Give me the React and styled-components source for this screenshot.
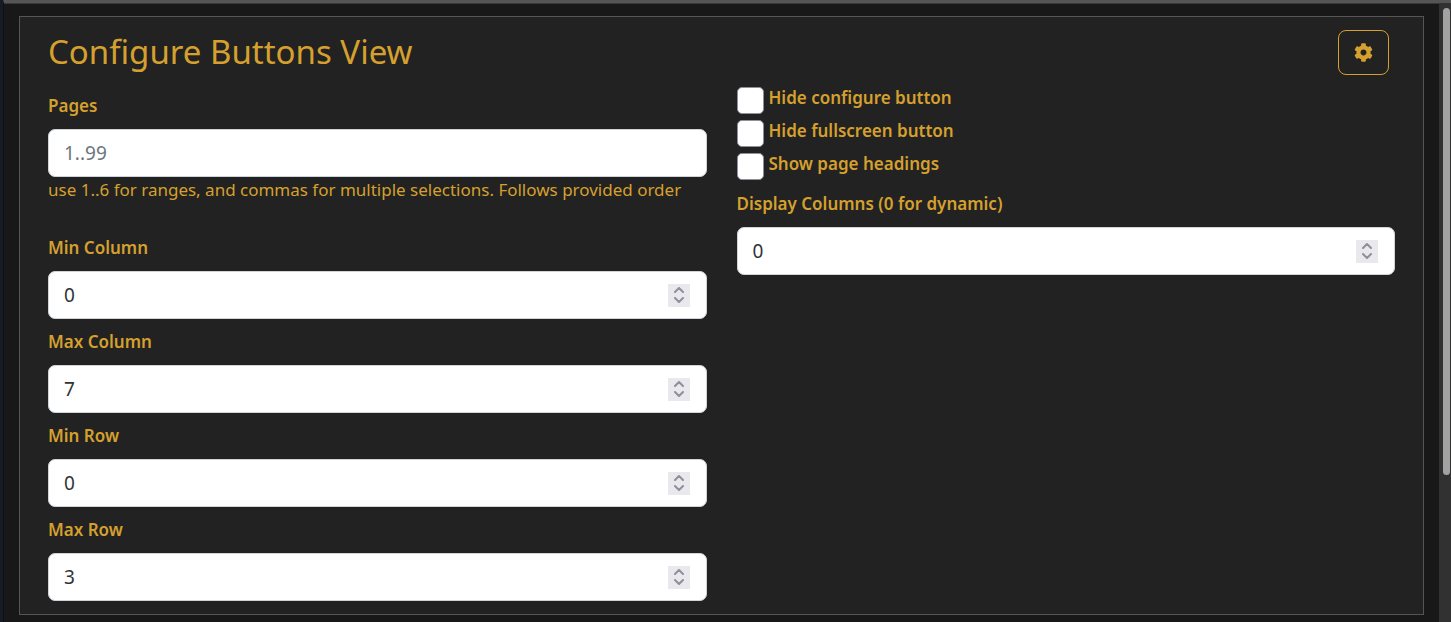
import React, { useState } from "react";
import styled, { createGlobalStyle } from "styled-components";

const GlobalStyle = createGlobalStyle`
  *, *::before, *::after { box-sizing: border-box; }
  body {
    margin: 0;
    background: #181818;
    color: #d5a02e;
    font-family: "Noto Sans", "Open Sans", sans-serif;
    font-size: 17px;
    line-height: 28px;
  }
`;

const Page = styled.div`
  display: flex;
  min-height: 100vh;
  border-left: 3px solid #161c24;
`;

const Main = styled.main`
  flex: 1;
  min-width: 0;
  border-top: 3px solid #555555;
  border-left: 1px solid #101010;
  box-shadow: inset 0 1px 0 #383838;
  padding: 13px 15px 6px;
`;

const Card = styled.section`
  display: flex;
  flex-direction: column;
  background: #222222;
  border: 1px solid #555555;
  padding: 13px 28px;
`;

const Header = styled.header`
  display: flex;
  justify-content: space-between;
  align-items: flex-start;
  padding-right: 6px;
`;

const Title = styled.h1`
  margin: 0;
  font-size: 33px;
  font-weight: 400;
  line-height: 44px;
`;

const SettingsButton = styled.button`
  display: flex;
  align-items: center;
  justify-content: center;
  width: 51px;
  height: 45px;
  padding: 0;
  color: inherit;
  background: transparent;
  border: 1px solid #d5a02e;
  border-radius: 8px;
  cursor: pointer;
`;

const Columns = styled.div`
  display: grid;
  grid-template-columns: 1fr 1fr;
  gap: 30px;
`;

const Column = styled.div`
  display: flex;
  flex-direction: column;
  gap: 9px;
  padding-top: ${(p) => (p.$compact ? 12 : 17)}px;
`;

const Field = styled.div`
  display: flex;
  flex-direction: column;
`;

const Label = styled.label`
  font-weight: 600;
  line-height: 28px;
  padding-bottom: 9px;
`;

const Box = styled.div`
  display: flex;
  align-items: center;
  height: 48px;
  padding: 0 16px 0 15px;
  background: #ffffff;
  border: 1px solid #ced4da;
  border-radius: 7px;
`;

const Input = styled.input`
  flex: 1;
  min-width: 0;
  height: 100%;
  padding: 0;
  border: 0;
  outline: 0;
  background: transparent;
  color: #303438;
  font: inherit;
  font-size: 19px;
  appearance: textfield;
  &::placeholder { color: #6c757d; opacity: 1; }
  &::-webkit-inner-spin-button { appearance: none; margin: 0; }
`;

const Stepper = styled.div`
  display: flex;
  flex-direction: column;
  width: 22px;
  height: 23px;
  background: #e9e9ed;
`;

const Step = styled.button`
  display: flex;
  flex: 1;
  align-items: ${(p) => (p.$up ? "flex-end" : "flex-start")};
  justify-content: center;
  min-height: 0;
  padding: 2px 0;
  border: 0;
  background: transparent;
  color: #8f8f9d;
`;

const Help = styled.p`
  margin: 0 0 22px;
  line-height: 26px;
`;

const Options = styled.div`
  display: flex;
  flex-direction: column;
  gap: 5px;
`;

const Option = styled.div`
  display: flex;
  align-items: flex-start;
  gap: 5px;
  height: 28px;
`;

const OptionLabel = styled.label`
  font-weight: 600;
  line-height: 22px;
`;

const Checkbox = styled.input`
  appearance: none;
  flex: none;
  width: 27px;
  height: 27px;
  margin: 0;
  background: #ffffff;
  border: 1px solid #8f8f9d;
  border-radius: 5px;
  &:checked { background: #d5a02e; }
`;

const ScrollTrack = styled.div`
  width: 12px;
  padding: 5px 1px 0 4px;
  border-top: 3px solid #555555;
  background: #313131;
`;

const ScrollThumb = styled.div`
  height: 75vh;
  border-radius: 4px;
  background: #a3a3a1;
`;

function GearIcon() {
  return (
    <svg width="19" height="19" viewBox="0 0 512 512" fill="currentColor" aria-hidden="true">
      <path d="M487.4 315.7l-42.6-24.6c4.3-23.2 4.3-47 0-70.2l42.6-24.6c4.9-2.8 7.1-8.6 5.5-14-11.1-35.6-30-67.8-54.7-94.6-3.8-4.1-10-5.1-14.8-2.3L380.8 110c-17.9-15.4-38.5-27.3-60.8-35.1V25.8c0-5.6-3.9-10.5-9.4-11.7-36.7-8.2-74.3-7.8-109.2 0-5.5 1.2-9.4 6.1-9.4 11.7V75c-22.2 7.9-42.8 19.8-60.8 35.1L88.7 85.5c-4.9-2.8-11-1.9-14.8 2.3-24.7 26.7-43.6 58.9-54.7 94.6-1.7 5.4.6 11.2 5.5 14L67.3 221c-4.3 23.2-4.3 47 0 70.2l-42.6 24.6c-4.9 2.8-7.1 8.6-5.5 14 11.1 35.6 30 67.8 54.7 94.6 3.8 4.1 10 5.1 14.8 2.3l42.6-24.6c17.9 15.4 38.5 27.3 60.8 35.1v49.2c0 5.6 3.9 10.5 9.4 11.7 36.7 8.2 74.3 7.8 109.2 0 5.5-1.2 9.4-6.1 9.4-11.7v-49.2c22.2-7.9 42.8-19.8 60.8-35.1l42.6 24.6c4.9 2.8 11 1.9 14.8-2.3 24.7-26.7 43.6-58.9 54.7-94.6 1.5-5.5-.7-11.3-5.6-14.1zM256 336c-44.1 0-80-35.9-80-80s35.9-80 80-80 80 35.9 80 80-35.9 80-80 80z" />
    </svg>
  );
}

function Chevron({ up }) {
  return (
    <svg width="10" height="6" viewBox="0 0 10 6" fill="none" stroke="currentColor" strokeWidth="2" strokeLinecap="round" strokeLinejoin="round" aria-hidden="true">
      <path d={up ? "M1 5L5 1L9 5" : "M1 1L5 5L9 1"} />
    </svg>
  );
}

function NumberField({ id, label, initial }) {
  const [value, setValue] = useState(initial);
  return (
    <Field>
      <Label htmlFor={id}>{label}</Label>
      <Box>
        <Input id={id} type="number" value={value} onChange={(e) => setValue(e.target.value)} />
        <Stepper>
          <Step $up type="button" aria-label={`Increase ${label}`} onClick={() => setValue(Number(value) + 1)}>
            <Chevron up />
          </Step>
          <Step type="button" aria-label={`Decrease ${label}`} onClick={() => setValue(Number(value) - 1)}>
            <Chevron />
          </Step>
        </Stepper>
      </Box>
    </Field>
  );
}

function CheckOption({ id, label }) {
  return (
    <Option>
      <Checkbox id={id} type="checkbox" />
      <OptionLabel htmlFor={id}>{label}</OptionLabel>
    </Option>
  );
}

export default function App() {
  return (
    <>
      <GlobalStyle />
      <Page>
        <Main>
          <Card>
            <Header>
              <Title>Configure Buttons View</Title>
              <SettingsButton type="button" aria-label="Settings">
                <GearIcon />
              </SettingsButton>
            </Header>
            <Columns>
              <Column>
                <Field>
                  <Label htmlFor="pages">Pages</Label>
                  <Box>
                    <Input id="pages" type="text" placeholder="1..99" />
                  </Box>
                  <Help>use 1..6 for ranges, and commas for multiple selections. Follows provided order</Help>
                </Field>
                <NumberField id="min-column" label="Min Column" initial={0} />
                <NumberField id="max-column" label="Max Column" initial={7} />
                <NumberField id="min-row" label="Min Row" initial={0} />
                <NumberField id="max-row" label="Max Row" initial={3} />
              </Column>
              <Column $compact>
                <Options>
                  <CheckOption id="hide-configure" label="Hide configure button" />
                  <CheckOption id="hide-fullscreen" label="Hide fullscreen button" />
                  <CheckOption id="show-headings" label="Show page headings" />
                </Options>
                <NumberField id="display-columns" label="Display Columns (0 for dynamic)" initial={0} />
              </Column>
            </Columns>
          </Card>
        </Main>
        <ScrollTrack>
          <ScrollThumb />
        </ScrollTrack>
      </Page>
    </>
  );
}
